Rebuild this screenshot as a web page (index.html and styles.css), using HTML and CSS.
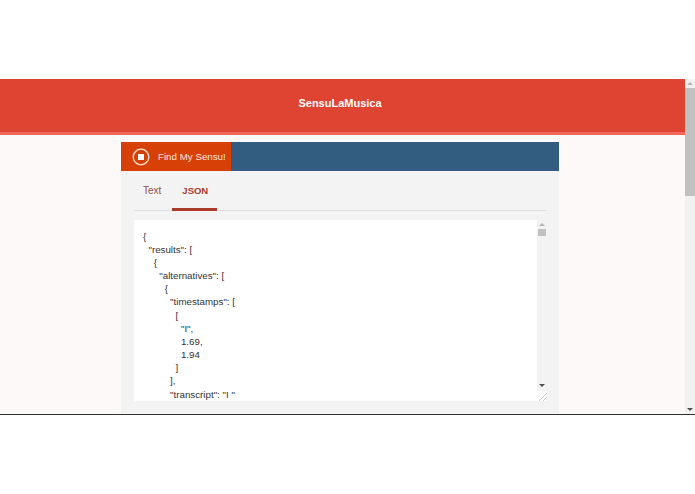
FILE: index.html
```html
<!DOCTYPE html>
<html lang="en">
<head>
    <meta charset="UTF-8">
    <meta name="viewport" content="width=device-width, initial-scale=1.0">
    <title>SensuLaMusica</title>
    <link rel="stylesheet" href="styles.css">
</head>
<body>
    <div class="window">
        <div class="page">
            <header class="navbar">SensuLaMusica</header>
            <div class="container">
                <div class="toolbar">
                    <button class="record-btn">
                        <svg class="stop-icon" width="18" height="18" viewBox="0 0 18 18">
                            <circle cx="9" cy="9" r="7.8" fill="none" stroke="#fbe6dc" stroke-width="1.3"/>
                            <rect x="6" y="6" width="6" height="6" fill="#fff"/>
                        </svg>
                        Find My Sensu!
                    </button>
                </div>
                <div class="panel">
                    <ul class="tabs">
                        <li class="tab">Text</li>
                        <li class="tab active">JSON</li>
                    </ul>
                    <div class="output">
                        <div class="output-text">{
  "results": [
    {
      "alternatives": [
        {
          "timestamps": [
            [
              "I",
              1.69,
              1.94
            ]
          ],
          "transcript": "I "</div>
                        <div class="inner-scroll">
                            <span class="arrow-up small"></span>
                            <span class="inner-thumb"></span>
                            <span class="spacer"></span>
                            <span class="arrow-down"></span>
                            <span class="resizer"></span>
                        </div>
                    </div>
                </div>
            </div>
        </div>
        <div class="page-scroll">
            <span class="arrow-up"></span>
            <span class="page-thumb"></span>
            <span class="spacer"></span>
            <span class="arrow-down"></span>
        </div>
    </div>
</body>
</html>
```

FILE: styles.css
```css
body {
    margin: 0;
    background-color: #fff;
    font-family: "Liberation Sans", Arial, sans-serif;
    color: #333;
}

.window {
    display: flex;
    height: 335px;
    margin-top: 79px;
    border-bottom: 1px solid #333;
    overflow: hidden;
}

.page {
    flex: 1;
    background-color: #fdf9f8;
    overflow: hidden;
}

.navbar {
    height: 53px;
    line-height: 49px;
    background-color: #df4331;
    border-bottom: 3px solid #f0685a;
    color: #fff;
    font-size: 11px;
    font-weight: bold;
    text-align: center;
    padding-right: 5px;
}

.container {
    width: 438px;
    margin: 7px 0 0 121px;
}

.toolbar {
    height: 29px;
    background-color: #325c80;
}

.record-btn {
    display: flex;
    align-items: center;
    gap: 8px;
    width: 110px;
    height: 29px;
    padding: 0 0 0 11px;
    border: 0;
    background-color: #d74108;
    color: #fbe6dc;
    font-family: inherit;
    font-size: 9.75px;
}

.panel {
    height: 243px;
    padding: 0 12px 0 13px;
    background-color: #f3f3f3;
}

.tabs {
    display: flex;
    height: 39px;
    margin: 0 0 9px;
    padding: 0;
    list-style: none;
    border-bottom: 1px solid #dfdfdf;
}

.tab {
    padding: 14px 10px 0 9px;
    font-size: 10px;
    color: #96504a;
}

.tab.active {
    width: 45px;
    box-sizing: border-box;
    margin-left: 1px;
    padding: 14px 0 0 10px;
    height: 40px;
    border-bottom: 3px solid #a93a2c;
    color: #a93a2c;
    font-size: 9.5px;
    font-weight: bold;
}

.output {
    display: flex;
    height: 181px;
}

.output-text {
    flex: 1;
    padding: 9.5px 9px 0;
    background-color: #fff;
    font-size: 9.75px;
    line-height: 13.17px;
    white-space: pre;
    overflow: hidden;
}

.inner-scroll {
    display: flex;
    flex-direction: column;
    align-items: center;
    width: 10px;
    padding-top: 3px;
}

.inner-thumb {
    width: 8px;
    height: 7px;
    margin-top: 3px;
    background-color: #c1c1c1;
}

.spacer {
    flex: 1;
}

.resizer {
    width: 10px;
    height: 10px;
    margin-top: 4px;
    background: linear-gradient(135deg, #fff 55%, #ccc 55%, #ccc 62%, #fff 62%, #fff 75%, #ccc 75%, #ccc 82%, #fff 82%);
}

.page-scroll {
    display: flex;
    flex-direction: column;
    align-items: center;
    width: 10px;
    background-color: #f1f1f1;
    padding: 3px 0;
}

.page-thumb {
    width: 10px;
    height: 108px;
    margin-top: 3px;
    background-color: #c1c1c1;
}

.arrow-up,
.arrow-down {
    width: 0;
    height: 0;
    border-left: 3px solid transparent;
    border-right: 3px solid transparent;
}

.arrow-up {
    border-bottom: 3px solid #b5b5b5;
}

.arrow-down {
    border-top: 3px solid #505050;
}
```
